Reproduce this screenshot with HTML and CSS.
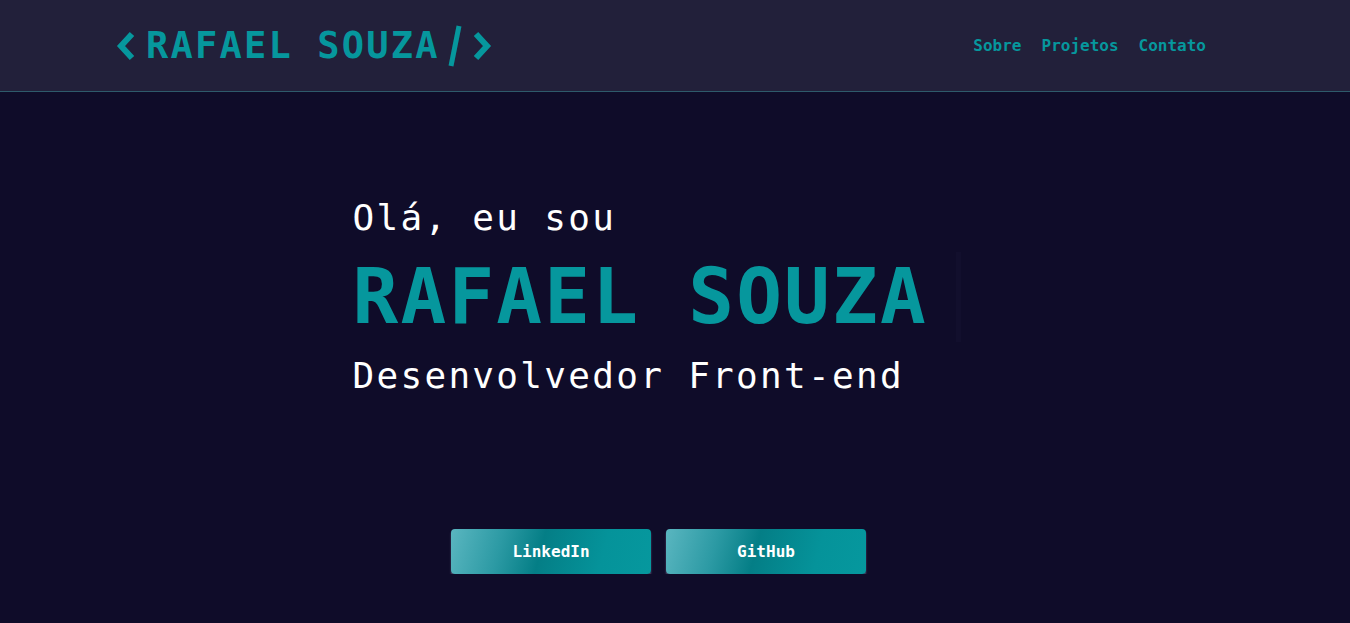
FILE: index.html
```html
<!DOCTYPE html>
<html lang="pt-BR">
<head>
<meta charset="utf-8">
<title>Rafael Souza</title>
<link rel="stylesheet" href="styles.css">
</head>
<body>
<div class="page">
  <header class="header">
    <a class="logo" href="#">
      <svg class="chev" width="20" height="30" viewBox="0 0 20 30"><polyline points="16,3 5,15 16,27" fill="none" stroke="#06979d" stroke-width="6" stroke-linecap="butt" stroke-linejoin="miter"/></svg>
      <span class="logo-text">RAFAEL SOUZA</span>
      <svg class="slash" width="14" height="42" viewBox="0 0 14 42"><line x1="11" y1="1" x2="3" y2="41" stroke="#06979d" stroke-width="5"/></svg>
      <svg class="chev" width="20" height="30" viewBox="0 0 20 30"><polyline points="4,3 15,15 4,27" fill="none" stroke="#06979d" stroke-width="6" stroke-linecap="butt" stroke-linejoin="miter"/></svg>
    </a>
    <nav class="nav">
      <a href="#sobre">Sobre</a>
      <a href="#projetos">Projetos</a>
      <a href="#contato">Contato</a>
    </nav>
  </header>
  <main class="hero">
    <div class="hero-text">
      <p class="hello">Olá, eu sou</p>
      <h1 class="name"><span class="typed">RAFAEL SOUZA</span></h1>
      <p class="role">Desenvolvedor Front-end</p>
    </div>
    <div class="buttons">
      <a class="btn" href="#">LinkedIn</a>
      <a class="btn" href="#">GitHub</a>
    </div>
  </main>
</div>
</body>
</html>
```
FILE: styles.css
```css
* { box-sizing: border-box; }
html, body {
  margin: 0;
  padding: 0;
  background: #0f0c29;
  font-family: "DejaVu Sans Mono", "Liberation Mono", monospace;
  overflow: hidden;
}
.page {
  width: 1317px;
}
.header {
  height: 92px;
  background: #22203a;
  border-bottom: 1px solid #2e5a6b;
  display: flex;
  align-items: center;
  justify-content: space-between;
  padding: 0 144px 0 116px;
  width: 1350px;
}
.logo {
  display: flex;
  align-items: center;
  text-decoration: none;
  color: #06979d;
}
.logo-text {
  font-size: 37px;
  font-weight: bold;
  letter-spacing: 2.2px;
  margin: 0 8px 0 10px;
  line-height: 1;
}
.slash { margin-right: 10px; }
.nav {
  display: flex;
  gap: 20px;
}
.nav a {
  color: #06979d;
  text-decoration: none;
  font-size: 16px;
  font-weight: bold;
}
.hero {
  display: flex;
  flex-direction: column;
  align-items: center;
}
.hero-text {
  width: 612px;
  margin-top: 104px;
  color: #ffffff;
}
.hello {
  margin: 0;
  font-size: 36px;
  letter-spacing: 2.3px;
  line-height: 44px;
}
.name {
  margin: 12px 0 0;
  font-size: 76px;
  letter-spacing: 2.2px;
  line-height: 90px;
  color: #06979d;
  font-weight: bold;
}
.typed {
  display: inline-block;
  padding-right: 28px;
  border-right: 5px solid #120f2d;
}
.role {
  margin: 12px 0 0;
  font-size: 36px;
  letter-spacing: 2.3px;
  line-height: 44px;
}
.buttons {
  display: flex;
  gap: 15px;
  margin-top: 131px;
}
.btn {
  width: 200px;
  height: 45px;
  display: flex;
  align-items: center;
  justify-content: center;
  color: #ffffff;
  text-decoration: none;
  font-size: 16px;
  font-weight: bold;
  border-radius: 4px;
  background: linear-gradient(105deg, #5ab6c0 0%, #2c9aa4 25%, #047e86 45%, #05939a 75%, #06989e 100%);
  box-shadow: 0 2px 2px rgba(130, 110, 150, 0.7);
}
```
